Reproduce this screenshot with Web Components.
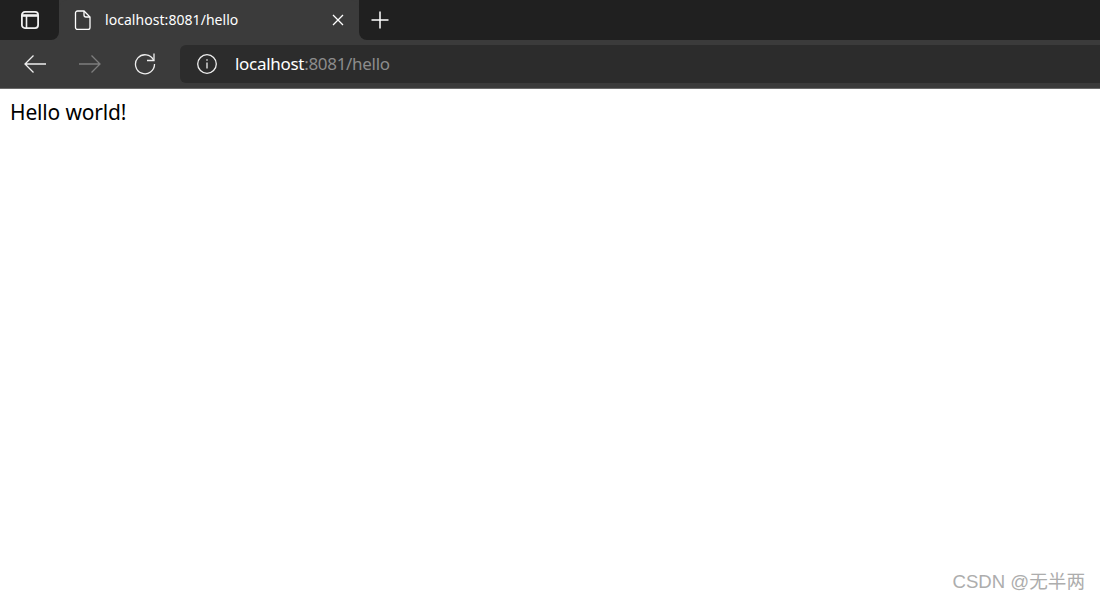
<!DOCTYPE html>
<html><head><meta charset="utf-8"><title>hello</title>
<style>html,body{margin:0;padding:0;height:100%;background:#fff}body{overflow:hidden}</style></head>
<body>
<browser-window>
  <browser-tabstrip></browser-tabstrip>
  <browser-toolbar></browser-toolbar>
  <page-content>Hello world!</page-content>
</browser-window>
<water-mark>CSDN @无半两</water-mark>
<script>
function def(name, html){
  customElements.define(name, class extends HTMLElement{
    constructor(){super();const s=this.attachShadow({mode:'open'});s.innerHTML=html;}
  });
}
const svg=(w,h,inner)=>`<svg width="${w}" height="${h}" viewBox="0 0 ${w} ${h}" fill="none" stroke="currentColor" stroke-width="1.3">${inner}</svg>`;
def('browser-window',`<style>:host{display:flex;flex-direction:column;width:1100px;height:600px}</style><slot></slot>`);
def('browser-tabstrip',`<style>
:host{display:flex;height:40px;background:#3b3b3b;color:#fff;font:14px/20px "Noto Sans",sans-serif;flex:none}
.side{width:59px;display:flex;align-items:center;justify-content:center;color:#f0f0f0;background:#202020;border-radius:0 0 8px 0;padding-left:1px;box-sizing:border-box}
.tab{width:300px;height:40px;background:#3b3b3b;border-radius:8px 8px 0 0;display:flex;align-items:center;padding:0 15px;box-sizing:border-box}
.title{margin-left:13px;flex:1;letter-spacing:.05px}
.tab svg{flex:none}
.new{flex:1;background:#202020;border-radius:0 0 0 8px;padding-left:12px;display:flex;align-items:center}
</style>
<div class="side">${svg(18,18,'<rect x="0.9" y="0.9" width="16.200" height="16.200" rx="3" stroke-width="1.800"/><path d="M1 4.500h16" stroke-width="2.600"/><path d="M5.500 5v12" stroke-width="1.600"/>')}</div>
<div class="tab">
${svg(18,20,'<path d="M1.500 3a2 2 0 0 1 2-2h6.500l6 6v10.500a2 2 0 0 1-2 2h-10.500a2 2 0 0 1-2-2z"/><path d="M10 1v4a2 2 0 0 0 2 2h4"/>')}
<span class="title">localhost:8081/hello</span>
${svg(12,12,'<path d="M1 1l10 10M11 1L1 11"/>')}
</div>
<div class="new">${svg(18,18,'<path d="M9 0.500v17M0.500 9h17" stroke-width="1.500"/>')}</div>`);
def('browser-toolbar',`<style>
:host{display:flex;height:49px;background:#3b3b3b;box-sizing:border-box;color:#eee;flex:none;padding:5px 0;position:relative}
:host::after{content:"";position:absolute;left:0;right:0;bottom:0;height:1px;background:#6a6a6a}
.btn{width:55px;height:37px;flex:none;display:flex;align-items:center;justify-content:center}
.back{width:62px;padding-left:8px;box-sizing:border-box}
.dim{color:#7d7d7d}
.addr{flex:1;height:38px;margin-left:8px;background:#2c2c2c;border-radius:6px 0 0 6px;display:flex;align-items:center;padding:0 0 1px 17px;box-sizing:border-box;font:17px/22px "Noto Sans",sans-serif;letter-spacing:-.3px;color:#8c8c8c}
.addr svg{color:#eee}
.addr b{font-weight:400;color:#fff}
.addr span{margin-left:18px}
</style>
<div class="btn back">${svg(24,20,'<path d="M23 10H2M10.500 1.500L2 10l8.500 8.500"/>')}</div>
<div class="btn dim">${svg(24,20,'<path d="M1 10h21M13.500 1.500L22 10l-8.500 8.500"/>')}</div>
<div class="btn">${svg(22,22,'<path d="M19.500 7A9.500 9.500 0 1 0 20.500 11"/><path d="M13 7.500h7V0.500"/>')}</div>
<div class="addr">${svg(20,20,'<circle cx="10" cy="10" r="9.300"/><path d="M10 8.500v6M10 5.300v1.500"/>')}<span><b>localhost</b>:8081/hello</span></div>`);
def('page-content',`<style>:host{display:block;flex:1;background:#fff;color:#000;font:21px/27px "Noto Sans",sans-serif;letter-spacing:-.17px;padding:10px}</style><slot></slot>`);
def('water-mark',`<style>:host{display:block;position:absolute;right:15px;top:570px;color:#adadad;font:18.600px/24px "Liberation Sans","Noto Sans CJK SC",sans-serif}</style><slot></slot>`);
</script>
</body></html>
